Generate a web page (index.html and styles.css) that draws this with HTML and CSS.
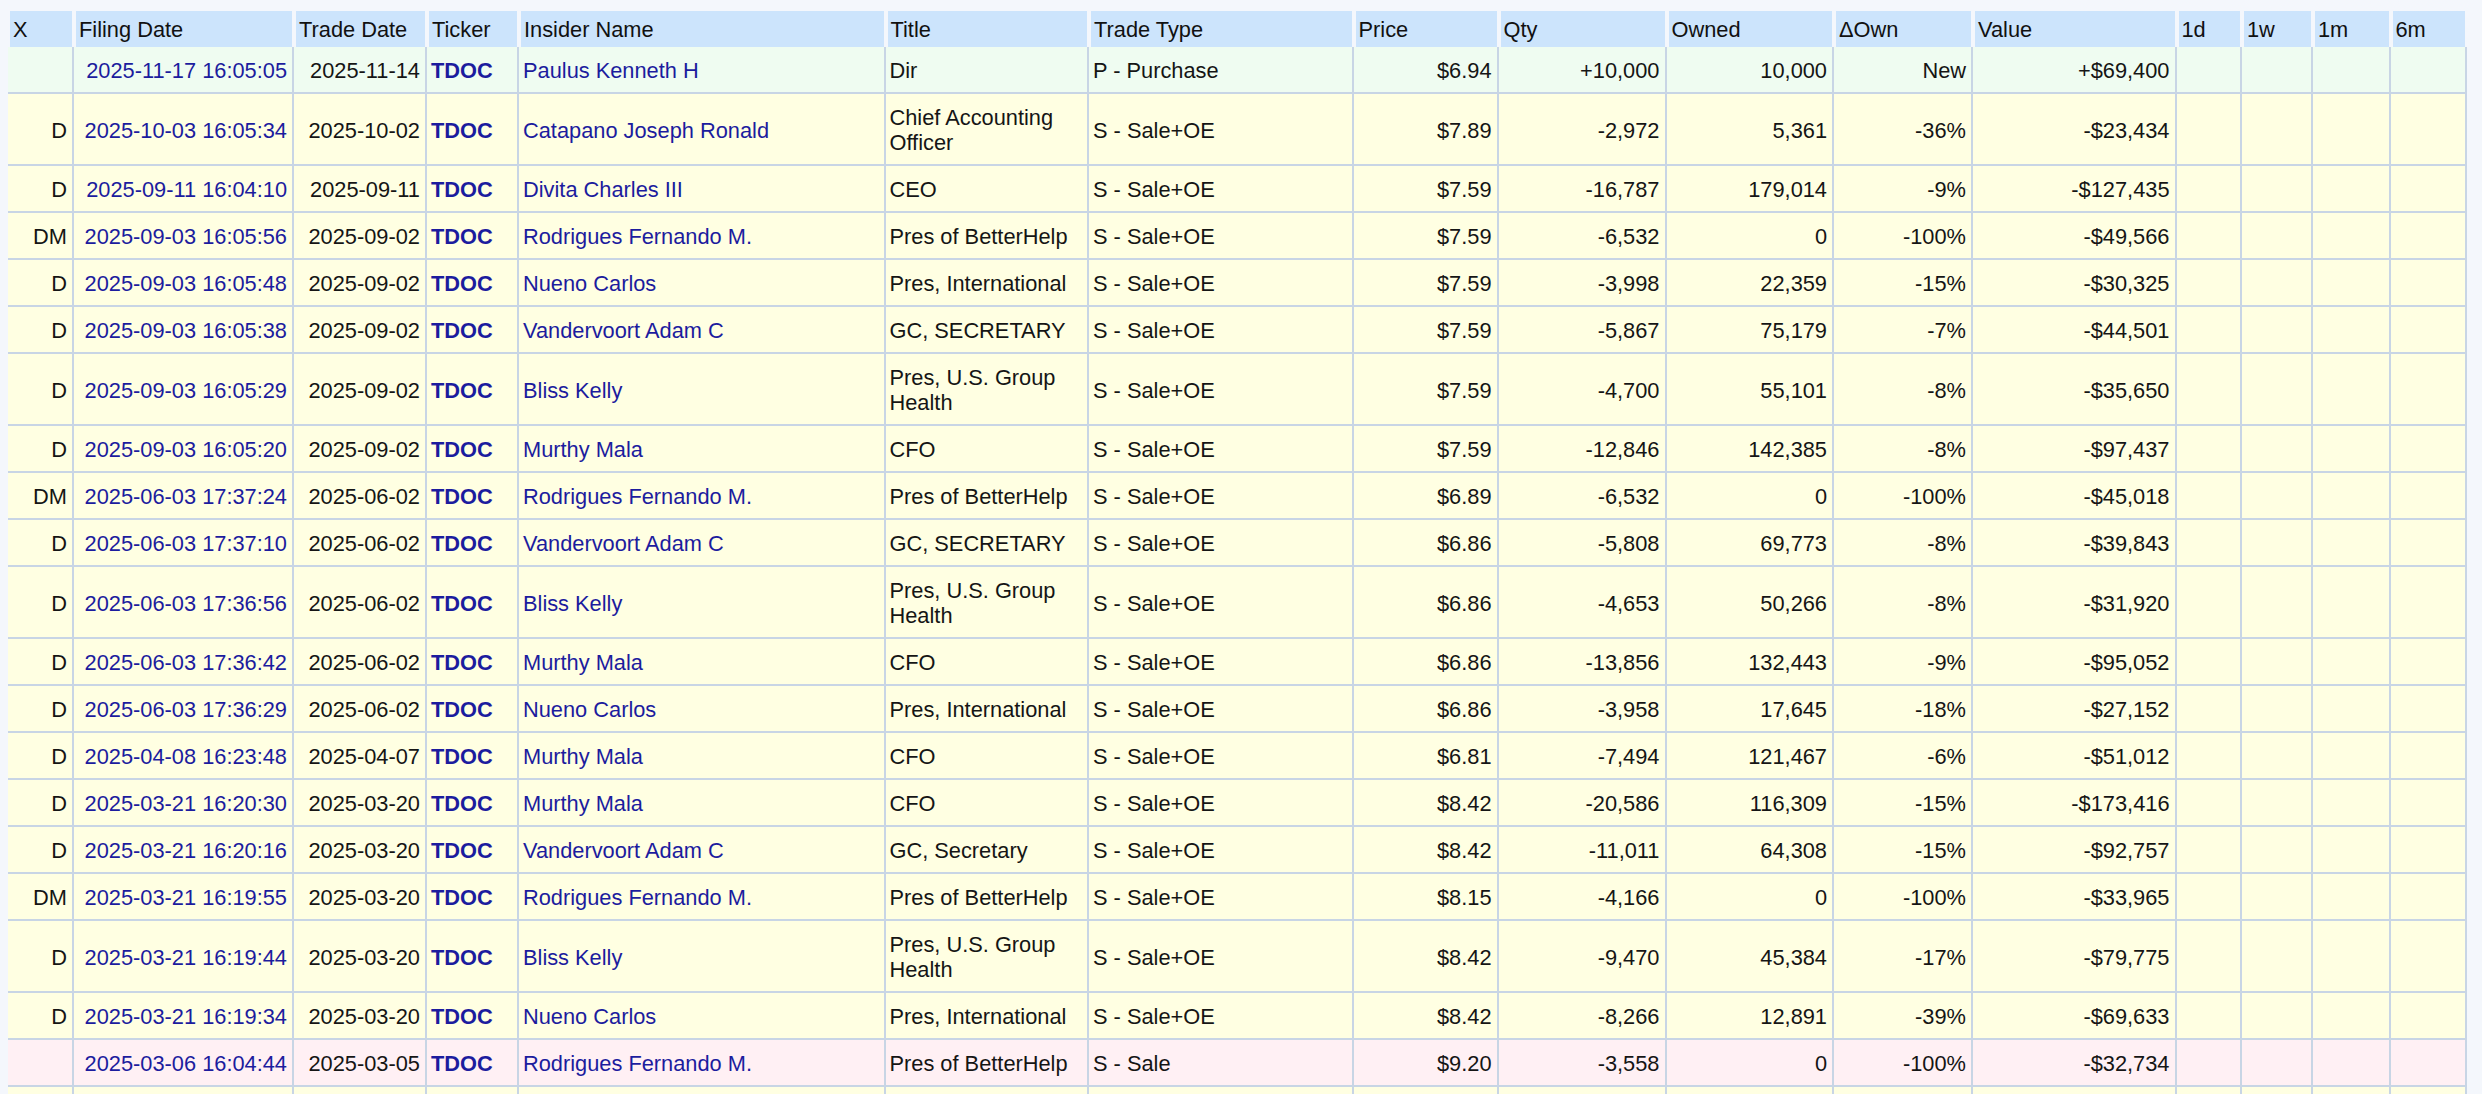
FILE: index.html
```html
<!DOCTYPE html>
<html>
<head>
<meta charset="utf-8">
<title>Insider Trades</title>
<link rel="stylesheet" href="styles.css">
</head>
<body>
<table class="tbl">
<thead>
<tr>
<th class="w-x">X</th><th class="w-fd">Filing Date</th><th class="w-td">Trade Date</th><th class="w-tk">Ticker</th><th class="w-in">Insider Name</th><th class="w-ti">Title</th><th class="w-tt">Trade Type</th><th class="w-pr">Price</th><th class="w-qt">Qty</th><th class="w-ow">Owned</th><th class="w-do">ΔOwn</th><th class="w-va">Value</th><th class="w-1d">1d</th><th class="w-1w">1w</th><th class="w-1m">1m</th><th class="w-6m">6m</th>
</tr>
</thead>
<tbody>
<tr class="buy"><td class="r"></td><td class="r"><a href="#">2025-11-17 16:05:05</a></td><td class="r">2025-11-14</td><td><a class="tk" href="#">TDOC</a></td><td><a href="#">Paulus Kenneth H</a></td><td>Dir</td><td>P - Purchase</td><td class="r">$6.94</td><td class="r">+10,000</td><td class="r">10,000</td><td class="r">New</td><td class="r">+$69,400</td><td></td><td></td><td></td><td></td></tr>
<tr class="sale"><td class="r">D</td><td class="r"><a href="#">2025-10-03 16:05:34</a></td><td class="r">2025-10-02</td><td><a class="tk" href="#">TDOC</a></td><td><a href="#">Catapano Joseph Ronald</a></td><td>Chief Accounting Officer</td><td>S - Sale+OE</td><td class="r">$7.89</td><td class="r">-2,972</td><td class="r">5,361</td><td class="r">-36%</td><td class="r">-$23,434</td><td></td><td></td><td></td><td></td></tr>
<tr class="sale"><td class="r">D</td><td class="r"><a href="#">2025-09-11 16:04:10</a></td><td class="r">2025-09-11</td><td><a class="tk" href="#">TDOC</a></td><td><a href="#">Divita Charles III</a></td><td>CEO</td><td>S - Sale+OE</td><td class="r">$7.59</td><td class="r">-16,787</td><td class="r">179,014</td><td class="r">-9%</td><td class="r">-$127,435</td><td></td><td></td><td></td><td></td></tr>
<tr class="sale"><td class="r">DM</td><td class="r"><a href="#">2025-09-03 16:05:56</a></td><td class="r">2025-09-02</td><td><a class="tk" href="#">TDOC</a></td><td><a href="#">Rodrigues Fernando M.</a></td><td>Pres of BetterHelp</td><td>S - Sale+OE</td><td class="r">$7.59</td><td class="r">-6,532</td><td class="r">0</td><td class="r">-100%</td><td class="r">-$49,566</td><td></td><td></td><td></td><td></td></tr>
<tr class="sale"><td class="r">D</td><td class="r"><a href="#">2025-09-03 16:05:48</a></td><td class="r">2025-09-02</td><td><a class="tk" href="#">TDOC</a></td><td><a href="#">Nueno Carlos</a></td><td>Pres, International</td><td>S - Sale+OE</td><td class="r">$7.59</td><td class="r">-3,998</td><td class="r">22,359</td><td class="r">-15%</td><td class="r">-$30,325</td><td></td><td></td><td></td><td></td></tr>
<tr class="sale"><td class="r">D</td><td class="r"><a href="#">2025-09-03 16:05:38</a></td><td class="r">2025-09-02</td><td><a class="tk" href="#">TDOC</a></td><td><a href="#">Vandervoort Adam C</a></td><td>GC, SECRETARY</td><td>S - Sale+OE</td><td class="r">$7.59</td><td class="r">-5,867</td><td class="r">75,179</td><td class="r">-7%</td><td class="r">-$44,501</td><td></td><td></td><td></td><td></td></tr>
<tr class="sale"><td class="r">D</td><td class="r"><a href="#">2025-09-03 16:05:29</a></td><td class="r">2025-09-02</td><td><a class="tk" href="#">TDOC</a></td><td><a href="#">Bliss Kelly</a></td><td>Pres, U.S. Group Health</td><td>S - Sale+OE</td><td class="r">$7.59</td><td class="r">-4,700</td><td class="r">55,101</td><td class="r">-8%</td><td class="r">-$35,650</td><td></td><td></td><td></td><td></td></tr>
<tr class="sale"><td class="r">D</td><td class="r"><a href="#">2025-09-03 16:05:20</a></td><td class="r">2025-09-02</td><td><a class="tk" href="#">TDOC</a></td><td><a href="#">Murthy Mala</a></td><td>CFO</td><td>S - Sale+OE</td><td class="r">$7.59</td><td class="r">-12,846</td><td class="r">142,385</td><td class="r">-8%</td><td class="r">-$97,437</td><td></td><td></td><td></td><td></td></tr>
<tr class="sale"><td class="r">DM</td><td class="r"><a href="#">2025-06-03 17:37:24</a></td><td class="r">2025-06-02</td><td><a class="tk" href="#">TDOC</a></td><td><a href="#">Rodrigues Fernando M.</a></td><td>Pres of BetterHelp</td><td>S - Sale+OE</td><td class="r">$6.89</td><td class="r">-6,532</td><td class="r">0</td><td class="r">-100%</td><td class="r">-$45,018</td><td></td><td></td><td></td><td></td></tr>
<tr class="sale"><td class="r">D</td><td class="r"><a href="#">2025-06-03 17:37:10</a></td><td class="r">2025-06-02</td><td><a class="tk" href="#">TDOC</a></td><td><a href="#">Vandervoort Adam C</a></td><td>GC, SECRETARY</td><td>S - Sale+OE</td><td class="r">$6.86</td><td class="r">-5,808</td><td class="r">69,773</td><td class="r">-8%</td><td class="r">-$39,843</td><td></td><td></td><td></td><td></td></tr>
<tr class="sale"><td class="r">D</td><td class="r"><a href="#">2025-06-03 17:36:56</a></td><td class="r">2025-06-02</td><td><a class="tk" href="#">TDOC</a></td><td><a href="#">Bliss Kelly</a></td><td>Pres, U.S. Group Health</td><td>S - Sale+OE</td><td class="r">$6.86</td><td class="r">-4,653</td><td class="r">50,266</td><td class="r">-8%</td><td class="r">-$31,920</td><td></td><td></td><td></td><td></td></tr>
<tr class="sale"><td class="r">D</td><td class="r"><a href="#">2025-06-03 17:36:42</a></td><td class="r">2025-06-02</td><td><a class="tk" href="#">TDOC</a></td><td><a href="#">Murthy Mala</a></td><td>CFO</td><td>S - Sale+OE</td><td class="r">$6.86</td><td class="r">-13,856</td><td class="r">132,443</td><td class="r">-9%</td><td class="r">-$95,052</td><td></td><td></td><td></td><td></td></tr>
<tr class="sale"><td class="r">D</td><td class="r"><a href="#">2025-06-03 17:36:29</a></td><td class="r">2025-06-02</td><td><a class="tk" href="#">TDOC</a></td><td><a href="#">Nueno Carlos</a></td><td>Pres, International</td><td>S - Sale+OE</td><td class="r">$6.86</td><td class="r">-3,958</td><td class="r">17,645</td><td class="r">-18%</td><td class="r">-$27,152</td><td></td><td></td><td></td><td></td></tr>
<tr class="sale"><td class="r">D</td><td class="r"><a href="#">2025-04-08 16:23:48</a></td><td class="r">2025-04-07</td><td><a class="tk" href="#">TDOC</a></td><td><a href="#">Murthy Mala</a></td><td>CFO</td><td>S - Sale+OE</td><td class="r">$6.81</td><td class="r">-7,494</td><td class="r">121,467</td><td class="r">-6%</td><td class="r">-$51,012</td><td></td><td></td><td></td><td></td></tr>
<tr class="sale"><td class="r">D</td><td class="r"><a href="#">2025-03-21 16:20:30</a></td><td class="r">2025-03-20</td><td><a class="tk" href="#">TDOC</a></td><td><a href="#">Murthy Mala</a></td><td>CFO</td><td>S - Sale+OE</td><td class="r">$8.42</td><td class="r">-20,586</td><td class="r">116,309</td><td class="r">-15%</td><td class="r">-$173,416</td><td></td><td></td><td></td><td></td></tr>
<tr class="sale"><td class="r">D</td><td class="r"><a href="#">2025-03-21 16:20:16</a></td><td class="r">2025-03-20</td><td><a class="tk" href="#">TDOC</a></td><td><a href="#">Vandervoort Adam C</a></td><td>GC, Secretary</td><td>S - Sale+OE</td><td class="r">$8.42</td><td class="r">-11,011</td><td class="r">64,308</td><td class="r">-15%</td><td class="r">-$92,757</td><td></td><td></td><td></td><td></td></tr>
<tr class="sale"><td class="r">DM</td><td class="r"><a href="#">2025-03-21 16:19:55</a></td><td class="r">2025-03-20</td><td><a class="tk" href="#">TDOC</a></td><td><a href="#">Rodrigues Fernando M.</a></td><td>Pres of BetterHelp</td><td>S - Sale+OE</td><td class="r">$8.15</td><td class="r">-4,166</td><td class="r">0</td><td class="r">-100%</td><td class="r">-$33,965</td><td></td><td></td><td></td><td></td></tr>
<tr class="sale"><td class="r">D</td><td class="r"><a href="#">2025-03-21 16:19:44</a></td><td class="r">2025-03-20</td><td><a class="tk" href="#">TDOC</a></td><td><a href="#">Bliss Kelly</a></td><td>Pres, U.S. Group Health</td><td>S - Sale+OE</td><td class="r">$8.42</td><td class="r">-9,470</td><td class="r">45,384</td><td class="r">-17%</td><td class="r">-$79,775</td><td></td><td></td><td></td><td></td></tr>
<tr class="sale"><td class="r">D</td><td class="r"><a href="#">2025-03-21 16:19:34</a></td><td class="r">2025-03-20</td><td><a class="tk" href="#">TDOC</a></td><td><a href="#">Nueno Carlos</a></td><td>Pres, International</td><td>S - Sale+OE</td><td class="r">$8.42</td><td class="r">-8,266</td><td class="r">12,891</td><td class="r">-39%</td><td class="r">-$69,633</td><td></td><td></td><td></td><td></td></tr>
<tr class="plain"><td class="r"></td><td class="r"><a href="#">2025-03-06 16:04:44</a></td><td class="r">2025-03-05</td><td><a class="tk" href="#">TDOC</a></td><td><a href="#">Rodrigues Fernando M.</a></td><td>Pres of BetterHelp</td><td>S - Sale</td><td class="r">$9.20</td><td class="r">-3,558</td><td class="r">0</td><td class="r">-100%</td><td class="r">-$32,734</td><td></td><td></td><td></td><td></td></tr>
<tr class="sale empty"><td></td><td></td><td></td><td></td><td></td><td></td><td></td><td></td><td></td><td></td><td></td><td></td><td></td><td></td><td></td><td></td></tr>
</tbody>
</table>
</body>
</html>
```
FILE: styles.css
```css
html, body {
  background: #f4f7fc;
}
body {
  margin: 0;
  font-family: "Liberation Sans", Arial, Helvetica, sans-serif;
  font-size: 21.8px;
  color: #151515;
}
.tbl {
  margin: 9px 0 0 8px;
  border-collapse: separate;
  border-spacing: 0;
  table-layout: fixed;
  width: 2459px;
}
.tbl th {
  box-sizing: border-box;
  background: #cce4fc;
  border: 2px solid #f4f7fc;
  border-bottom: 0;
  padding: 6px 4px 5px 3px;
  line-height: 25px;
  font-weight: normal;
  text-align: left;
  white-space: nowrap;
  color: #111;
}
.tbl td {
  box-sizing: border-box;
  border-right: 2px solid #c8d5e5;
  border-bottom: 2px solid #c8d5e5;
  padding: 11px 5px 9px 4px;
  line-height: 25px;
  vertical-align: middle;
}
.tbl td.r {
  text-align: right;
}
.tbl .empty td {
  height: 47px;
}
.tbl a {
  color: #1c1c9e;
  text-decoration: none;
}
.tbl a.tk {
  font-weight: bold;
}
.buy td { background: #effcf1; }
.sale td { background: #ffffe2; }
.plain td { background: #fff0f4; }

.w-x { width: 66px; }
.w-fd { width: 220px; }
.w-td { width: 133px; }
.w-tk { width: 92px; }
.w-in { width: 366.5px; }
.w-ti { width: 203.5px; }
.w-tt { width: 264.5px; }
.w-pr { width: 145px; }
.w-qt { width: 168px; }
.w-ow { width: 167.5px; }
.w-do { width: 139px; }
.w-va { width: 203.5px; }
.w-1d { width: 65.5px; }
.w-1w { width: 71px; }
.w-1m { width: 77.5px; }
.w-6m { width: 76.5px; }
```
